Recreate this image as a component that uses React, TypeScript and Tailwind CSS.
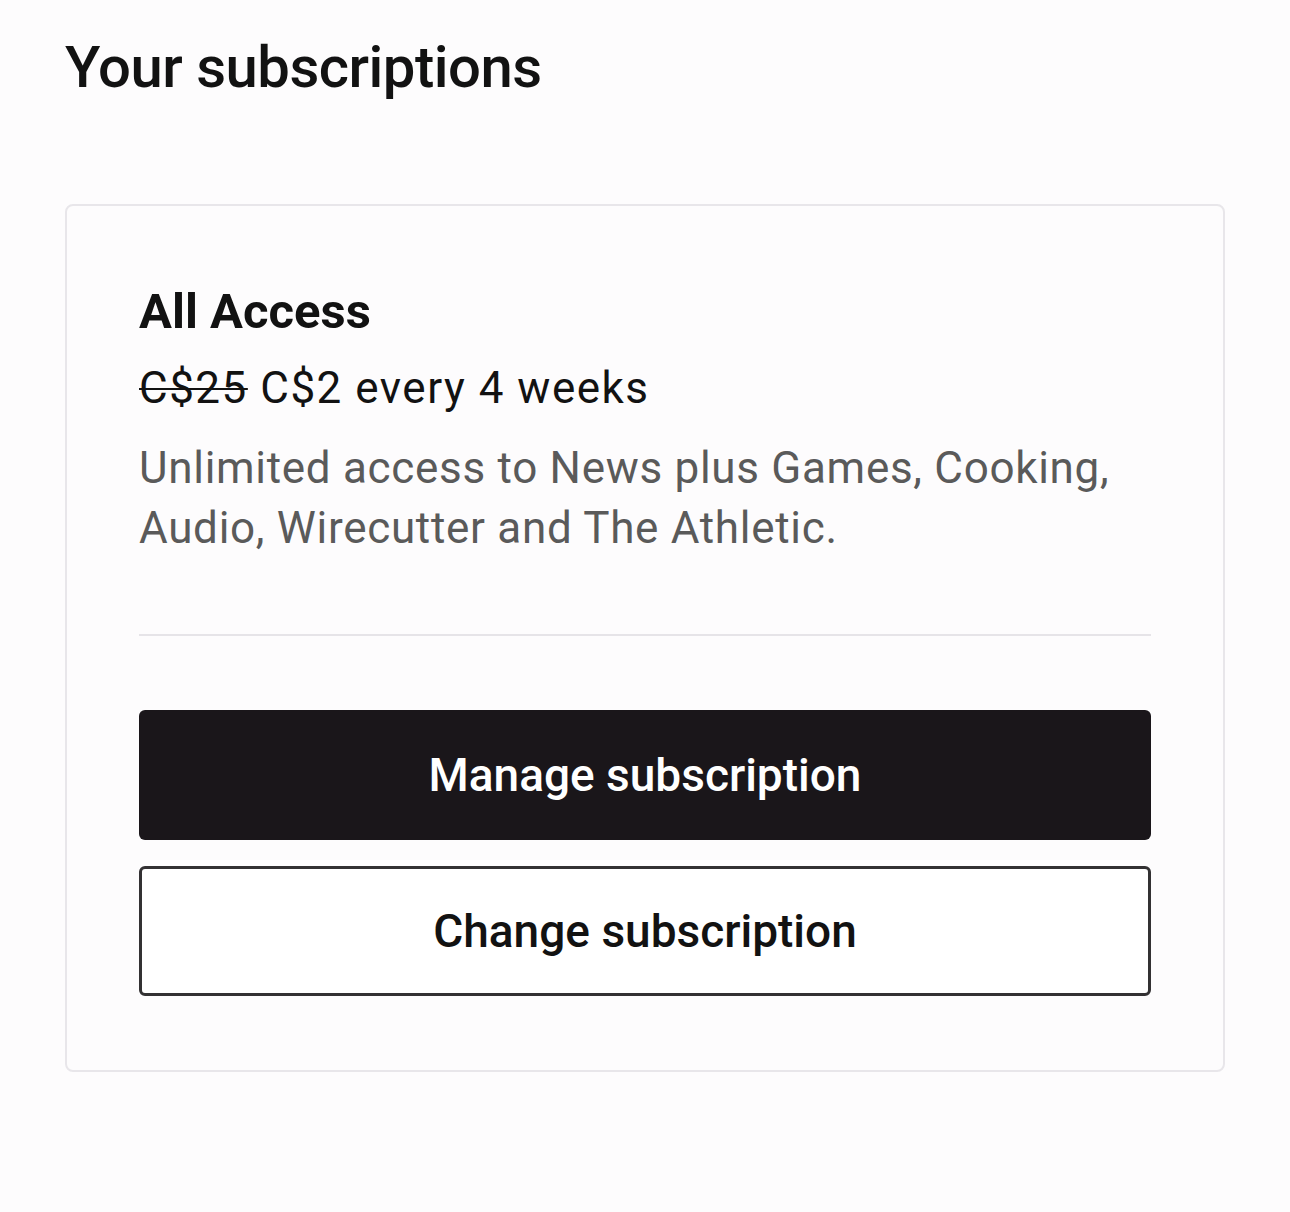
import React from 'react';

const font = { fontFamily: 'Roboto, "Liberation Sans", sans-serif' };

export default function App() {
  return (
    <div className="min-h-screen bg-[#fdfcfd] px-[65px] pt-[38px]" style={font}>
      {/* Header */}
      <h1 className="text-[58px] leading-[58px] font-medium text-[#121212] tracking-[-0.5px]">
        Your subscriptions
      </h1>

      {/* Card */}
      <div className="mt-[108px] rounded-[8px] border-2 border-[#e8e6ea] bg-[#fdfcfd] px-[72px] pt-[78px] pb-[74px]">
        <h2 className="text-[49px] leading-[56px] font-bold text-[#121212]">All Access</h2>
        <p className="mt-[20px] text-[44px] leading-[56px] text-[#121212] tracking-[1.5px]">
          <span className="line-through decoration-2">C$25</span> C$2 every 4 weeks
        </p>
        <p className="mt-[22px] text-[44px] leading-[60px] text-[#5a5a5a] tracking-[0.7px]">
          Unlimited access to News plus Games, Cooking,
          <br />
          Audio, Wirecutter and The Athletic.
        </p>

        <div className="mt-[76px] h-[2px] bg-[#e6e4e8]" />

        {/* Actions */}
        <div className="mt-[74px] flex flex-col gap-[26px]">
          <button className="h-[130px] w-full rounded-[6px] bg-[#1a161a] text-[46px] font-medium text-white">
            Manage subscription
          </button>
          <button className="h-[130px] w-full rounded-[6px] border-[3px] border-[#333133] bg-white text-[46px] font-medium text-[#121212]">
            Change subscription
          </button>
        </div>
      </div>
    </div>
  );
}
